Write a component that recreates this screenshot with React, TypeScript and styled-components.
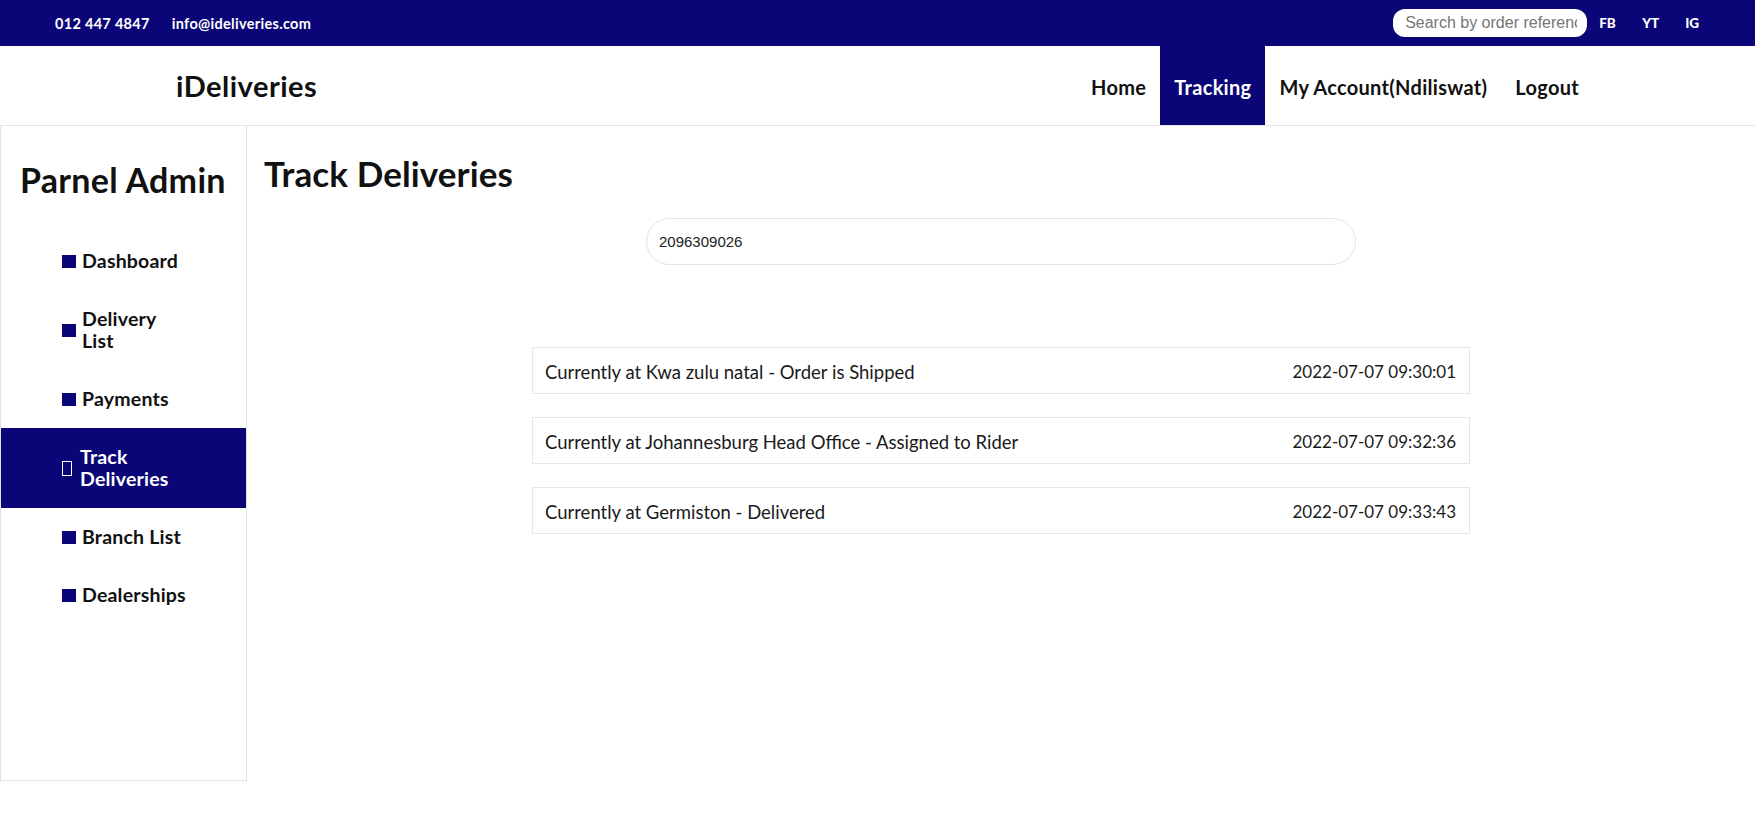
import React from "react";
import styled, { createGlobalStyle } from "styled-components";

const NAVY = "#0a0677";

const GlobalStyle = createGlobalStyle`
  html, body { margin: 0; padding: 0; background: #fff; }
  body { font-family: Lato, "Open Sans", sans-serif; color: #111; }
  * { box-sizing: border-box; }
`;

const TopBar = styled.div`
  height: 46px;
  background: ${NAVY};
  display: flex;
  align-items: center;
  justify-content: space-between;
  padding: 0 56px 0 55px;
`;

const Contacts = styled.div`
  display: flex;
  gap: 22px;
  color: #fff;
  font-weight: 700;
  font-size: 14.5px;
  letter-spacing: 0.3px;
`;

const TopRight = styled.div`
  display: flex;
  align-items: center;
`;

const TopSearch = styled.input`
  width: 194px;
  height: 28px;
  border: none;
  border-radius: 12px;
  padding: 0 10px 0 12px;
  font-family: "Liberation Sans", Arial, sans-serif;
  font-size: 16px;
  color: #333;
  outline: none;
  margin-right: 12px;
  &::placeholder { color: #767676; }
`;

const Social = styled.a<{ $last?: boolean }>`
  color: #fff;
  font-weight: 900;
  font-size: 13.5px;
  text-decoration: none;
  width: ${(p) => (p.$last ? "auto" : "43px")};
`;

const NavBar = styled.div`
  height: 80px;
  display: flex;
  align-items: stretch;
  justify-content: space-between;
  padding: 0 162px 0 176px;
  border-bottom: 1px solid #e4e4e6;
`;

const Logo = styled.div`
  display: flex;
  align-items: center;
  font-size: 29px;
  font-weight: 700;
  color: #111;
  letter-spacing: 0.5px;
`;

const NavLinks = styled.nav`
  display: flex;
  align-items: stretch;
`;

const NavLink = styled.a<{ $active?: boolean }>`
  display: flex;
  align-items: center;
  padding: 2px 14px 0;
  font-size: 20px;
  font-weight: 700;
  text-decoration: none;
  color: ${(p) => (p.$active ? "#fff" : "#111")};
  background: ${(p) => (p.$active ? NAVY : "transparent")};
  letter-spacing: 0.3px;
`;

const Body = styled.div`
  display: flex;
  align-items: flex-start;
`;

const Sidebar = styled.aside`
  width: 247px;
  height: 655px;
  border: 1px solid #e2e2e4;
  border-top: none;
  flex-shrink: 0;
`;

const SideTitle = styled.h2`
  margin: 0;
  padding: 34px 0 0 19px;
  height: 106px;
  font-size: 34px;
  font-weight: 700;
  letter-spacing: 0.3px;
  line-height: 40px;
  color: #111;
`;

const Menu = styled.ul`
  list-style: none;
  margin: 0;
  padding: 0;
`;

const MenuItem = styled.li<{ $active?: boolean }>`
  display: flex;
  align-items: center;
  padding: 18px 0 18px 61px;
  background: ${(p) => (p.$active ? NAVY : "transparent")};
  color: ${(p) => (p.$active ? "#fff" : "#111")};
  font-size: 19.5px;
  font-weight: 700;
  line-height: 22px;
  letter-spacing: 0.2px;
`;

const Bullet = styled.span<{ $active?: boolean }>`
  flex-shrink: 0;
  width: ${(p) => (p.$active ? "10px" : "14px")};
  height: ${(p) => (p.$active ? "15px" : "13px")};
  margin-right: ${(p) => (p.$active ? "8px" : "6px")};
  background: ${(p) => (p.$active ? "transparent" : NAVY)};
  border: ${(p) => (p.$active ? "1px solid #fff" : "none")};
`;

const Label = styled.span`
  display: flex;
  flex-direction: column;
`;

const Main = styled.main`
  flex: 1;
  display: flex;
  flex-direction: column;
  align-items: center;
  padding-top: 27px;
`;

const Title = styled.h1`
  align-self: flex-start;
  margin: 0 0 0 17px;
  font-size: 35px;
  line-height: 40px;
  font-weight: 700;
  letter-spacing: 0.1px;
  color: #111;
`;

const TrackInput = styled.input`
  margin-top: 25px;
  width: 710px;
  height: 47px;
  border: 1px solid #e3e3e6;
  border-radius: 24px;
  padding: 0 12px;
  font-family: "Liberation Sans", Arial, sans-serif;
  font-size: 15px;
  color: #222;
  outline: none;
`;

const Timeline = styled.div`
  margin-top: 82px;
  width: 938px;
  display: flex;
  flex-direction: column;
  gap: 23px;
`;

const Row = styled.div`
  height: 47px;
  border: 1px solid #e6e6e8;
  display: flex;
  align-items: center;
  justify-content: space-between;
  padding: 2px 13px 0 12px;
  font-size: 18.5px;
  color: #1a1a1a;
`;

const Stamp = styled.span`
  font-size: 17px;
`;

const menu: { lines: string[]; active?: boolean }[] = [
  { lines: ["Dashboard"] },
  { lines: ["Delivery", "List"] },
  { lines: ["Payments"] },
  { lines: ["Track", "Deliveries"], active: true },
  { lines: ["Branch List"] },
  { lines: ["Dealerships"] },
];

const events = [
  ["Currently at Kwa zulu natal - Order is Shipped", "2022-07-07 09:30:01"],
  ["Currently at Johannesburg Head Office - Assigned to Rider", "2022-07-07 09:32:36"],
  ["Currently at Germiston - Delivered", "2022-07-07 09:33:43"],
];

export default function App() {
  return (
    <>
      <GlobalStyle />
      <TopBar>
        <Contacts>
          <span>012 447 4847</span>
          <span>info@ideliveries.com</span>
        </Contacts>
        <TopRight>
          <TopSearch placeholder="Search by order reference" />
          <Social>FB</Social>
          <Social>YT</Social>
          <Social $last>IG</Social>
        </TopRight>
      </TopBar>
      <NavBar>
        <Logo>iDeliveries</Logo>
        <NavLinks>
          <NavLink>Home</NavLink>
          <NavLink $active>Tracking</NavLink>
          <NavLink>My Account(Ndiliswat)</NavLink>
          <NavLink>Logout</NavLink>
        </NavLinks>
      </NavBar>
      <Body>
        <Sidebar>
          <SideTitle>Parnel Admin</SideTitle>
          <Menu>
            {menu.map((m) => (
              <MenuItem key={m.lines.join(" ")} $active={m.active}>
                <Bullet $active={m.active} />
                <Label>
                  {m.lines.map((l) => (
                    <span key={l}>{l}</span>
                  ))}
                </Label>
              </MenuItem>
            ))}
          </Menu>
        </Sidebar>
        <Main>
          <Title>Track Deliveries</Title>
          <TrackInput defaultValue="2096309026" />
          <Timeline>
            {events.map(([t, d]) => (
              <Row key={d}>
                <span>{t}</span>
                <Stamp>{d}</Stamp>
              </Row>
            ))}
          </Timeline>
        </Main>
      </Body>
    </>
  );
}
